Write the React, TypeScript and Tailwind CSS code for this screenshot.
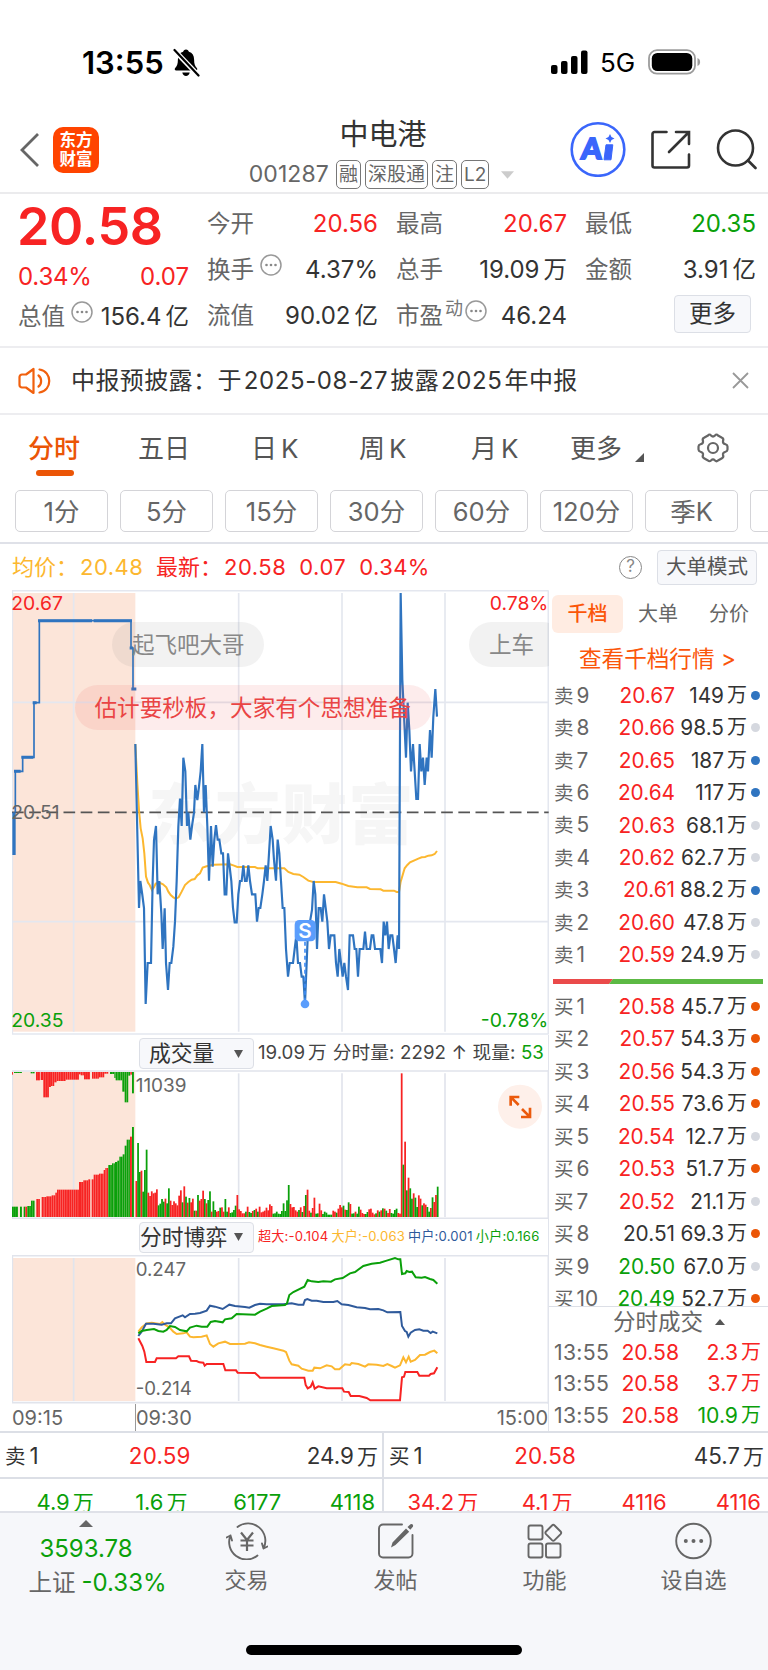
import type { ReactNode } from 'react'

const RED = '#f72323'
const GREEN = '#0aa00a'
const BLUE = '#2f74c0'
const AMBER = '#fcb72f'
const NAVY = '#2f5a9b'

// Chart coordinates are stored in thirds of a pixel
type Point = [number, number]

const shift = (points: Point[], dx: number): Point[] => points.map(([x, y]) => [x + dx, y])
const toPath = (points: Point[]) => points.map((p) => p.join(',')).join(' ')

const auctionLine: Point[] = [
  [46, 697], [46, 574], [62, 574], [68, 574], [68, 532], [102, 532], [102, 368], [118, 368], [118, 122],
  [393, 122], [393, 204], [399, 204], [399, 327], [406, 327],
]

const priceLine: Point[] = [
  [406, 492], [417, 984], [421, 903], [427, 945], [432, 984], [437, 1272], [443, 1149], [453, 1149], [458, 903],
  [462, 780], [468, 738], [473, 943], [478, 903], [484, 1000], [488, 1107], [494, 985], [498, 1149], [504, 1230],
  [509, 1149], [514, 1149], [520, 1100], [525, 1025], [530, 903], [535, 740], [540, 656], [545, 738], [550, 533],
  [556, 574], [561, 738], [565, 698], [571, 779], [576, 738], [582, 698], [586, 615], [592, 660], [597, 620],
  [602, 574], [607, 492], [612, 697], [617, 615], [622, 738], [627, 902], [633, 738], [638, 860], [643, 779],
  [648, 735], [653, 779], [658, 779], [664, 820], [669, 820], [674, 943], [679, 943], [684, 820], [689, 861],
  [694, 903], [699, 984], [704, 1027], [710, 1027], [715, 943], [720, 903], [725, 903], [730, 856], [735, 903],
  [740, 903], [745, 856], [750, 903], [756, 943], [766, 943], [771, 1025], [776, 984], [781, 984], [787, 943],
  [792, 903], [797, 856], [802, 903], [807, 820],
  ...shift([
    [2, 738], [8, 779], [12, 840], [18, 902], [23, 779], [28, 820], [33, 903], [38, 984], [43, 984], [48, 1107],
    [54, 1190], [59, 1149], [69, 1149], [74, 1107], [79, 1066], [84, 1149], [90, 1149], [95, 1190], [100, 1190],
    [105, 1272], [110, 1149], [115, 1025], [120, 1025], [126, 990], [131, 903], [136, 943], [141, 1107],
    [146, 984], [152, 984], [157, 1025], [162, 943], [167, 984], [172, 1025], [177, 1107], [182, 1066],
    [193, 1066], [198, 1149], [203, 1190], [208, 1107], [213, 1149], [218, 1190], [223, 1149], [228, 1190],
    [234, 1230], [239, 1066], [249, 1066], [254, 1107], [259, 1107], [264, 1190], [269, 1107], [280, 1107],
    [285, 1055], [290, 1107], [300, 1107], [305, 1066], [310, 1066], [315, 1107], [331, 1107], [336, 1149],
    [341, 1025], [346, 1066], [351, 1025], [356, 1107], [361, 1066], [367, 1066], [372, 1107], [377, 1149],
    [383, 1066], [387, 1107], [392, 39], [397, 300], [408, 533], [413, 368], [418, 450], [423, 574], [429, 492],
    [434, 574], [439, 657], [444, 657], [449, 492], [454, 574], [459, 533], [464, 615], [470, 533], [474, 574],
    [480, 450], [485, 533], [490, 410], [496, 327], [501, 410],
  ], 810),
]

const averageLine: Point[] = [
  [406, 492], [412, 610], [417, 690], [422, 745], [428, 775], [433, 820], [438, 890], [444, 908], [449, 915],
  [456, 930], [462, 922], [467, 911], [478, 908], [489, 913], [499, 922], [505, 935], [512, 945], [520, 952],
  [527, 956], [536, 952], [545, 935], [555, 915], [565, 906], [575, 899], [584, 897], [592, 886], [600, 880],
  [608, 863], [620, 859], [640, 854], [690, 853], [702, 857], [712, 861], [765, 861], [773, 865],
  ...shift([
    [43, 865], [55, 876], [70, 882], [88, 884], [100, 891], [115, 902], [130, 906], [197, 906], [215, 911],
    [235, 918], [262, 922], [290, 922], [300, 927], [332, 928], [340, 932], [372, 932], [380, 936], [387, 936],
    [392, 905], [398, 885], [404, 865], [412, 855], [420, 847], [445, 836], [455, 832], [465, 831], [475, 827],
    [485, 826], [494, 822], [501, 813],
  ], 810),
]

// [from, to, edge, colour]
type Run = [number, number, number, 'r' | 'g']

const auctionVolume: Run[] = [
  [36, 54, 530, 'g'], [60, 66, 530, 'g'], [71, 76, 530, 'g'], [76, 82, 530, 'r'], [82, 93, 528, 'g'],
  [93, 104, 512, 'g'], [109, 120, 507, 'r'], [125, 139, 501, 'r'], [139, 155, 499, 'r'], [155, 166, 496, 'r'],
  [166, 171, 488, 'r'], [171, 237, 479, 'r'], [237, 250, 456, 'r'], [250, 265, 451, 'r'], [265, 271, 448, 'r'],
  [275, 281, 448, 'r'], [281, 297, 434, 'r'], [297, 311, 431, 'r'], [311, 316, 420, 'r'], [316, 325, 414, 'r'],
  [325, 336, 405, 'g'], [336, 345, 400, 'g'], [345, 352, 396, 'g'], [352, 358, 392, 'g'], [358, 368, 380, 'g'],
  [368, 374, 373, 'g'], [374, 380, 347, 'g'], [380, 390, 329, 'g'], [390, 396, 320, 'r'], [396, 402, 291, 'g'],
]

const auctionUnmatched: Run[] = [
  [36, 39, 134, 'r'], [42, 66, 129, 'g'], [92, 104, 130, 'g'], [108, 120, 151, 'r'], [122, 130, 150, 'r'],
  [130, 147, 202, 'r'], [147, 153, 171, 'r'], [153, 163, 168, 'r'], [163, 170, 157, 'r'], [170, 197, 153, 'r'],
  [197, 237, 149, 'r'], [237, 242, 133, 'r'], [242, 252, 136, 'r'], [252, 270, 148, 'r'], [276, 297, 146, 'r'],
  [297, 313, 142, 'r'], [313, 325, 131, 'r'], [330, 343, 132, 'g'], [343, 347, 144, 'g'], [347, 367, 151, 'g'],
  [367, 374, 185, 'g'], [374, 385, 217, 'g'], [385, 391, 137, 'g'], [391, 396, 134, 'r'], [396, 402, 190, 'g'],
]

const volumeBefore =
  'r453 g339 g426 r422 g485 g420 g359 r488 r498 r484 r490 r488 r478 g526 g521 g507 g515 r506 g520 g475 r512 r525 r514 r520 r526 r497 r481 g517 r469 g500 r518 g504 r517 r506 g542 r542 g495 r512 r507 r482 g507 r520 g510 g484 r545 g514 g540 r545 r543 g533 r532 r545 g507 g545 r532 g549 g547 g540 g527 r495 r538 r543 r550 r550 g545 r530 g546 g549 r543 g540 r536 g545 r530 r547 r545 r542 r533 r541 r523 r528 g551 g550 g545 g551 g552 g543 g520 g543 g511 g465 r522 r532 r531 r541 r545 g540 r532 g546 r528 g495 r479 r542 g548 r534 r503 g551 g550 r521 r541 g552 g545 g548 g554 g554 g554 r542 r545 g548 r536 r525 r532 g527 r539 g540 g517 r522 g551 g550 r545 g551 g530 r539 r549 r552 g552 g546 r538 r536 r548 r553 g550 r541 g545 r541 g535 r536 g542 r549 r537 g549 g551 g540 g536 r549 r551'
const volumeAfter =
  'r130 g404 r335 g481 r443 g475 g506 r490 g503 g531 r496 r506 g526 r520 r524 g531 g545 r534 g502 r516 r495 g470'

const flowLines: { color: string; points: Point[] }[] = [
  {
    color: AMBER,
    points: [
      [415, 905], [425, 892], [440, 880], [455, 878], [480, 882], [487, 876], [495, 884], [508, 892], [520, 905],
      [530, 912], [550, 910], [560, 907], [570, 920], [580, 922], [605, 920], [620, 916], [630, 942], [640, 950],
      [655, 940], [675, 935], [690, 942], [710, 942], [735, 941], [747, 937], [765, 940], [780, 945], [800, 950],
      [820, 955], [850, 962], [858, 966],
      ...shift([
        [118, 992], [125, 1003], [145, 1007], [155, 1016], [175, 1022], [188, 1022], [193, 1013], [210, 1015],
        [230, 1006], [245, 1009], [255, 1018], [268, 1018], [285, 1003], [300, 1005], [305, 999], [325, 1002],
        [345, 1010], [355, 1003], [380, 1004], [400, 1008], [412, 1002], [425, 1008], [435, 1013], [450, 1006],
        [460, 982], [468, 997], [476, 980], [482, 995], [495, 990], [510, 975], [525, 974], [540, 966],
        [553, 962], [562, 970],
      ], 750),
    ],
  },
  {
    color: NAVY,
    points: [
      [415, 918], [425, 905], [438, 881], [460, 881], [485, 884], [500, 880], [513, 880], [525, 865], [548, 856],
      [555, 862], [570, 852], [585, 851], [600, 849], [620, 842], [630, 827], [645, 830], [668, 837], [688, 824],
      [705, 828], [735, 831], [748, 833], [765, 825], [780, 821], [800, 823], [850, 823],
      ...shift([
        [125, 820], [145, 824], [160, 824], [165, 810], [172, 807], [185, 812], [200, 812], [220, 816],
        [250, 816], [262, 813], [275, 823], [295, 825], [320, 832], [345, 834], [360, 838], [385, 837],
        [400, 841], [412, 847], [451, 846], [456, 888], [465, 903], [470, 906], [475, 920], [482, 908],
        [495, 900], [508, 898], [520, 902], [533, 902], [542, 909], [548, 905], [562, 910],
      ], 750),
    ],
  },
  {
    color: GREEN,
    points: [
      [415, 910], [425, 903], [440, 900], [462, 897], [475, 903], [490, 905], [500, 900], [510, 888], [525, 891],
      [540, 900], [560, 904], [570, 893], [590, 887], [605, 890], [622, 890], [632, 876], [645, 873], [668, 877],
      [675, 868], [695, 865], [710, 852], [765, 854], [780, 845], [800, 836], [815, 828], [855, 825], [861, 820],
      ...shift([
        [118, 795], [130, 786], [163, 770], [173, 750], [185, 754], [205, 756], [220, 754], [243, 755],
        [255, 748], [278, 744], [300, 730], [315, 726], [340, 708], [365, 701], [390, 698], [410, 692],
        [435, 684], [445, 688], [451, 688], [456, 732], [466, 730], [470, 723], [478, 726], [486, 725],
        [497, 742], [515, 743], [525, 741], [540, 747], [550, 750], [562, 761],
      ], 750),
    ],
  },
  {
    color: RED,
    points: [
      [415, 925], [427, 948], [433, 965], [439, 996], [465, 996], [470, 985], [528, 985], [535, 979], [567, 979],
      [573, 992], [590, 993], [598, 997], [610, 998], [614, 1007], [620, 1002], [670, 1002], [676, 1021],
      [708, 1021], [713, 1028], [765, 1029], [775, 1038], [780, 1043],
      ...shift([
        [163, 1043], [167, 1065], [173, 1075], [182, 1070], [188, 1057], [194, 1076], [205, 1069], [230, 1075],
        [277, 1075], [282, 1085], [296, 1086], [302, 1098], [328, 1098], [350, 1104], [361, 1111], [450, 1111],
        [456, 1042], [462, 1040], [466, 1026], [502, 1026], [508, 1037], [537, 1037], [542, 1032], [552, 1030],
        [562, 1012],
      ], 750),
    ],
  },
]

const sells = [
  ['9', '20.67', '149', 'b'], ['8', '20.66', '98.5', ''], ['7', '20.65', '187', 'b'], ['6', '20.64', '117', 'b'],
  ['5', '20.63', '68.1', ''], ['4', '20.62', '62.7', ''], ['3', '20.61', '88.2', 'b'], ['2', '20.60', '47.8', ''],
  ['1', '20.59', '24.9', ''],
]

const buys = [
  ['1', '20.58', '45.7', 'o'], ['2', '20.57', '54.3', 'o'], ['3', '20.56', '54.3', 'o'], ['4', '20.55', '73.6', 'o'],
  ['5', '20.54', '12.7', ''], ['6', '20.53', '51.7', 'o'], ['7', '20.52', '21.1', ''], ['8', '20.51', '69.3', 'o'],
  ['9', '20.50', '67.0', ''], ['10', '20.49', '52.7', 'o'],
]

const trades = [
  ['2.3', 'text-[#f72323]'],
  ['3.7', 'text-[#f72323]'],
  ['10.9', 'text-[#0aa00a]'],
]

const periods = ['1分', '5分', '15分', '30分', '60分', '120分', '季K', '']

function StatusBar() {
  return (
    <div className="flex h-[106px] items-start justify-between pr-[67px] pl-[82px]">
      <div className="mt-[44px] flex items-center gap-[9px]">
        <span className="text-[31px] leading-[38px] font-semibold">13:55</span>
        <svg width="27" height="30" viewBox="0 0 27 30" className="-mt-px">
          <path d="M13 1.5c1.6 0 2.6 1 2.9 2.3 3.5 1 5.2 4 5.2 7.6 0 4.6.9 6.6 2.7 8.6.9 1.1.5 2.5-1 2.5H3.2c-1.5 0-1.9-1.4-1-2.5 1.8-2 2.7-4 2.7-8.6 0-3.6 1.7-6.6 5.2-7.6C10.4 2.5 11.4 1.5 13 1.5zM9.3 24.500h7.400c-.4 2-1.900 3.500-3.700 3.500s-3.300-1.500-3.700-3.500z" fill="#000" />
          <path d="M2 3 25 27" stroke="#fff" strokeWidth="5" />
          <path d="M1.5 2 25.5 27.5" stroke="#000" strokeWidth="2.2" strokeLinecap="round" />
        </svg>
      </div>
      <div className="mt-[49px] flex h-[26px] items-center">
        <svg width="37" height="26" viewBox="0 0 37 26">
          <rect x="0" y="16" width="6.5" height="9" rx="2" />
          <rect x="10" y="12" width="6.5" height="13" rx="2" />
          <rect x="20" y="7" width="6.5" height="18" rx="2" />
          <rect x="30" y="1.5" width="6.5" height="23.5" rx="2" />
        </svg>
        <span className="ml-[12px] w-[48px] pt-[2px] text-[26px] leading-none">5G</span>
        <svg width="53" height="26" viewBox="0 0 53 26">
          <rect x="1" y="1.2" width="46" height="23.5" rx="8" fill="none" stroke="#9c9c9c" strokeWidth="1.8" />
          <rect x="3.8" y="4" width="40.5" height="18" rx="5.5" />
          <path d="M49.5 9v8c1.8-.7 2.6-2.2 2.6-4s-.8-3.3-2.6-4z" fill="#9c9c9c" />
        </svg>
      </div>
    </div>
  )
}

function Tag({ children }: { children: ReactNode }) {
  return (
    <span className="flex h-[29px] items-center rounded-[5px] border border-[#777] px-[2px] text-[19px] leading-none text-[#666]">
      {children}
    </span>
  )
}

function Header() {
  return (
    <header className="flex h-[88px] justify-between border-b-2 border-[#ebebed] pr-[11px] pl-[19px]">
      <div className="flex w-[179px] items-center pt-px">
        <svg width="21" height="36" viewBox="0 0 21 36" fill="none" stroke="#666" strokeWidth="2.8">
          <path d="M19 2 3 18l16 16" />
        </svg>
        <div className="ml-[13px] flex h-[46px] w-[46px] flex-col items-center justify-center rounded-[10px] bg-[#ff4400] text-[16.5px] leading-[19px] font-bold text-white">
          <span>东方</span>
          <span>财富</span>
        </div>
      </div>
      <div className="flex flex-col items-center">
        <h1 className="mt-[9px] mr-[2px] text-center text-[29px] leading-[40px] text-[#333]">中电港</h1>
        <div className="mt-[5px] mr-[5px] flex items-center gap-[4px]">
          <span className="mr-[3px] text-[23px] leading-none tracking-[0.1px] text-[#666]">001287</span>
          <Tag>融</Tag>
          <Tag>深股通</Tag>
          <Tag>注</Tag>
          <Tag>L2</Tag>
          <svg width="13" height="8" viewBox="0 0 14 8" className="ml-[8px]">
            <path d="M0 0h14L7 8z" fill="#ccc" />
          </svg>
        </div>
      </div>
      <div className="flex w-[187px] items-center justify-between">
        <svg width="56" height="56" viewBox="0 0 56 56">
          <circle cx="28" cy="28.5" r="26.3" fill="none" stroke="#3a66fb" strokeWidth="2.6" />
          <text x="11" y="38.5" fontSize="29" fontWeight="900" fill="#3a66fb" stroke="#3a66fb" strokeWidth="1.8" fontFamily="Lato" transform="skewX(-4) translate(2.5 0)">
            A
          </text>
          <path d="M36 23.8h6.8l-1.8 15h-7z" fill="#3a66fb" stroke="#3a66fb" strokeWidth="1" strokeLinejoin="round" />
          <path d="M40 13l1.5 3 3 1.5-3 1.5-1.5 3-1.5-3-3-1.5 3-1.5z" fill="#3a66fb" />
        </svg>
        <svg width="41" height="41" viewBox="0 0 41 41" fill="none" stroke="#333" strokeWidth="2.6" strokeLinecap="round">
          <path d="M16.5 3H4.500a2 2 0 0 0-2 2v31.500a2 2 0 0 0 2 2h32.500a2 2 0 0 0 2-2V25.500" />
          <path d="M26 3h13V15M38.500 3.500 19 23" />
        </svg>
        <svg width="41" height="41" viewBox="0 0 41 41" fill="none" stroke="#333" strokeWidth="2.6" strokeLinecap="round">
          <circle cx="19.5" cy="19" r="17.5" />
          <path d="m32 31.5 7.5 7.5" />
        </svg>
      </div>
    </header>
  )
}

function Dots() {
  return (
    <svg width="22" height="22" viewBox="0 0 22 22" className="mb-[10px] ml-[6px]" fill="#888">
      <circle cx="11" cy="11" r="10" fill="none" stroke="#999" strokeWidth="1.5" />
      <circle cx="6.5" cy="11" r="1.3" />
      <circle cx="11" cy="11" r="1.3" />
      <circle cx="15.5" cy="11" r="1.3" />
    </svg>
  )
}

function Stat({
  label,
  value,
  unit,
  extra,
  className = 'text-[#333]',
}: {
  label: string
  value: string
  unit?: string
  extra?: ReactNode
  className?: string
}) {
  return (
    <div className="flex h-[46px] items-center whitespace-nowrap">
      <span className="text-[23.5px] text-[#666]">{label}</span>
      {extra}
      <span className={`ml-auto text-[24px] ${className}`}>
        {value}
        {unit && <span className="ml-[4px] text-[23.5px]">{unit}</span>}
      </span>
    </div>
  )
}

function Quote() {
  return (
    <section className="flex h-[154px] border-b-2 border-[#ededf0] pl-[18px]">
      <div className="w-[171px]">
        <div className="mt-[5px] -ml-px text-[52px] leading-[56px] font-semibold tracking-[-0.3px] text-[#f72323]">20.58</div>
        <div className="mt-[8px] flex justify-between text-[24px] leading-[28px] text-[#f72323]">
          <span className="tracking-[-0.2px]">0.34%</span>
          <span>0.07</span>
        </div>
        <div className="mt-[3px]">
          <Stat label="总值" value="156.4" unit="亿" extra={<Dots />} />
        </div>
      </div>
      <div className="mt-[7px] ml-[18px] w-[171px]">
        <Stat label="今开" value="20.56" className="text-[#f72323]" />
        <Stat label="换手" value="4.37%" extra={<Dots />} />
        <Stat label="流值" value="90.02" unit="亿" />
      </div>
      <div className="mt-[7px] ml-[18px] w-[171px]">
        <Stat label="最高" value="20.67" className="text-[#f72323]" />
        <Stat label="总手" value="19.09" unit="万" />
        <Stat
          label="市盈"
          value="46.24"
          extra={
            <span className="flex items-center">
              <span className="-mr-[4px] mb-[16px] ml-[2px] text-[18px] text-[#777]">动</span>
              <Dots />
            </span>
          }
        />
      </div>
      <div className="mt-[7px] ml-[18px] w-[171px]">
        <Stat label="最低" value="20.35" className="text-[#0aa00a]" />
        <Stat label="金额" value="3.91" unit="亿" />
        <button className="mt-[2px] ml-[89px] flex h-[38px] w-[77px] items-center justify-center rounded-[4px] border border-[#dcdfe6] bg-[#f7f8fb] text-[23.5px] text-[#333]">
          更多
        </button>
      </div>
    </section>
  )
}

function Notice() {
  return (
    <section className="flex h-[67px] items-center border-b-2 border-[#ededf0] pr-[19px] pl-[18px]">
      <svg width="34" height="28" viewBox="0 0 34 28" fill="none" stroke="#f1600d" strokeWidth="2.2" strokeLinejoin="round" strokeLinecap="round">
        <path d="M15.5 2v24L8 20.5H4a2.5 2.5 0 0 1-2.5-2.5v-8A2.5 2.5 0 0 1 4 7.5h4z" />
        <path d="M20.5 8.5c3.5 2.5 3.5 8.5 0 11M21.5 2.5C34.500 4.500 34.500 23.500 21.500 25.500" />
      </svg>
      <span className="ml-[19px] flex text-[24px] tracking-[0.4px] text-[#333]">
        中报预披露：于<span className="mx-[2px] tracking-[0.6px]">2025-08-27</span>披露
        <span className="mx-[2px] tracking-[0.6px]">2025</span>年中报
      </span>
      <svg width="17" height="17" viewBox="0 0 17 17" className="ml-auto" stroke="#999" strokeWidth="1.8">
        <path d="m1 1 15 15M16 1 1 16" />
      </svg>
    </section>
  )
}

function KTab({ label, className }: { label: string; className: string }) {
  return (
    <span className={className}>
      {label}
      <span className="ml-[4px]">K</span>
    </span>
  )
}

function ChartTabs() {
  return (
    <nav className="flex h-[75px] items-start pt-[15px] text-[26px] leading-[38px] whitespace-nowrap text-[#555]">
      <div className="ml-[28px] w-[110px] font-medium text-[#eb5506]">
        分时
        <div className="mt-[2px] ml-[8px] h-[6px] w-[38px] rounded-full bg-[#eb5506]" />
      </div>
      <span className="w-[113px]">五日</span>
      <KTab label="日" className="w-[108px]" />
      <KTab label="周" className="w-[112px]" />
      <KTab label="月" className="w-[99px]" />
      <span className="flex w-[127px]">
        更多
        <svg width="9" height="9" viewBox="0 0 9 9" className="mt-[23px] ml-[13px]">
          <path d="M9 0v9H0z" fill="#555" />
        </svg>
      </span>
      <svg width="32" height="32" viewBox="0 0 32 32" className="mt-[2px]" fill="none" stroke="#666" strokeWidth="2.2" strokeLinejoin="round">
        <path d="M11 3.5q1.5-2 3 0q2 2 4 0q1.5-2 3 0l4 2.3q2 1 1 3.2q-.5 2.5 2.5 3.3q2 .7 2 2.2v3q0 1.5-2 2.2q-3 .8-2.5 3.3q1 2.2-1 3.2l-4 2.3q-1.5 1.5-3 0q-2-2-4 0q-1.5 1.5-3 0l-4-2.3q-2-1-1-3.2q.5-2.5-2.5-3.3q-2-.7-2-2.2v-3q0-1.5 2-2.2q3-.8 2.5-3.3q-1-2.2 1-3.2z" />
        <circle cx="16" cy="16" r="5" />
      </svg>
    </nav>
  )
}

function PeriodBar() {
  return (
    <div className="flex h-[54px] gap-[12px] overflow-hidden border-b-2 border-[#dfe1e8] pl-[15px]">
      {periods.map((label) => (
        <button key={label} className="flex h-[42px] w-[93px] shrink-0 items-center justify-center rounded-[5px] border border-[#d4d4d8] pt-[2px] text-[25.5px] text-[#666]">
          {label}
        </button>
      ))}
    </div>
  )
}

function PriceSummary() {
  return (
    <div className="flex h-[46px] items-center pr-[11px] pl-[12px] text-[22px] whitespace-nowrap">
      <span className="text-[#fcb72f]">均价：</span>
      <span className="ml-[2px] w-[76px] tracking-[0.5px] text-[#fcb72f]">20.48</span>
      <span className="text-[#f72323]">最新：</span>
      <span className="ml-[2px] tracking-[0.5px] text-[#f72323]">20.58</span>
      <span className="ml-[13px] tracking-[0.5px] text-[#f72323]">0.07</span>
      <span className="ml-[13px] tracking-[0.4px] text-[#f72323]">0.34%</span>
      <span className="ml-auto flex size-[23px] items-center justify-center rounded-full border-[1.5px] border-[#888] text-[17px] text-[#888]">?</span>
      <button className="ml-[15px] flex h-[35px] w-[100px] items-center justify-center rounded-[4px] border border-[#dcdfe6] bg-[#f7f8fb] pt-px text-[20.5px] text-[#555]">
        大单模式
      </button>
    </div>
  )
}

const gridX = [221, 716, 1026, 1335]

function PriceChart() {
  return (
    <div className="relative h-[445px] overflow-hidden">
      <svg width="537" height="445" viewBox="36 30 1611 1335" className="absolute inset-0" fontFamily="Inter" fontSize="58">
        <rect x="36" y="39" width="370" height="1316" fill="#fce5d9" />
        <text x="445" y="774" fontSize="196" letterSpacing="4" fontWeight="900" fill="#f6f6f6" fontFamily="Noto Sans CJK SC">
          东方财富
        </text>
        <g stroke="#e4e7ef" strokeWidth="5">
          <path d="M36 32H1646M36 1362H1646M37 32V1362M1645 32V1362M36 367H1646M36 1025H1646" />
          {gridX.map((x) => (
            <path key={x} d={`M${x} 39V1355`} />
          ))}
        </g>
        <path d="M36 697H1646" stroke="#555" strokeWidth="5" strokeDasharray="35 16.5" />
        <polyline points={toPath(averageLine)} fill="none" stroke={AMBER} strokeWidth="6" />
        <g fill="none" stroke={BLUE}>
          <polyline points={toPath(auctionLine)} strokeWidth="5" />
          <path d="M42 697V825" strokeWidth="10" />
          <path d="M42 574H62M64 532H100M98 368H110M114 122H276M281 122H396M389 204H399M394 327H409" strokeWidth="9" />
          <polyline points={toPath(priceLine)} strokeWidth="6.5" />
        </g>
        <path d="M915 1085V1262" stroke="#3f8cf5" strokeWidth="5" strokeDasharray="12 9" />
        <circle cx="915" cy="1272" r="13" fill="#5a9dfc" />
        <rect x="884" y="1020" width="63" height="64" rx="14" fill="#5a9dfc" />
        <text x="915" y="1074" textAnchor="middle" fill="#fff" fontWeight="600" fontSize="62">
          S
        </text>
        <text x="34" y="90" fill={RED}>20.67</text>
        <text x="34" y="716" fill="#666">20.51</text>
        <text x="34" y="1341" fill={GREEN}>20.35</text>
        <text x="1645" y="90" fill={RED} textAnchor="end">0.78%</text>
        <text x="1645" y="1341" fill={GREEN} textAnchor="end">-0.78%</text>
      </svg>
      <div className="absolute top-[32px] left-[100px] h-[45px] w-[152px] rounded-full bg-[#808080]/10 pl-[20px] text-[22.5px] leading-[46px] text-[#888]">
        起飞吧大哥
      </div>
      <div className="absolute top-[32px] left-[457px] h-[45px] w-[96px] rounded-full bg-[#808080]/10 pl-[20px] text-[22.5px] leading-[46px] text-[#888]">
        上车
      </div>
      <div className="absolute top-[95px] left-[63px] h-[45px] w-[357px] rounded-full bg-[#e84848]/10 pl-[19.5px] text-[22.6px] leading-[46px] whitespace-nowrap text-[#ea4444]">
        估计要秒板，大家有个思想准备
      </div>
    </div>
  )
}

function IndicatorSelect({ label }: { label: string }) {
  return (
    <button className="ml-[127px] flex h-[31px] w-[115px] shrink-0 items-center rounded-[4px] border border-[#dcdfe6] bg-[#f7f8fb] text-left text-[21.8px] whitespace-nowrap text-[#333]">
      <span className={label.length > 3 ? 'w-[94px]' : 'w-[94px] pl-[9px]'}>{label}</span>
      <svg width="9" height="8" viewBox="0 0 9 8">
        <path d="M0 0h9L4.5 8z" fill="#555" />
      </svg>
    </button>
  )
}

function runBars(runs: Run[], base: number) {
  return runs.flatMap(([from, to, edge, color]) => {
    const count = Math.max(1, Math.round((to - from) / 5.4))
    const step = (to - from) / count
    return Array.from({ length: count }, (_, i) => (
      <rect
        key={`${from}-${i}`}
        x={from + i * step}
        y={Math.min(edge, base)}
        width={step - 0.3}
        height={Math.abs(base - edge)}
        fill={color === 'r' ? RED : GREEN}
      />
    ))
  })
}

function minuteBars(data: string, from: number, to: number) {
  const bars = data.split(' ')
  const step = (to - from) / (bars.length - 1)
  return bars.map((bar, i) => (
    <rect
      key={i}
      x={from + i * step - 2.6}
      y={Number(bar.slice(1))}
      width="5.3"
      height={561 - Number(bar.slice(1))}
      fill={bar[0] === 'r' ? RED : GREEN}
    />
  ))
}

function VolumeChart() {
  return (
    <svg width="537" height="149" viewBox="36 120 1611 447" fontFamily="Inter" fontSize="57">
      <rect x="36" y="125" width="370" height="436" fill="#fce5d9" />
      <g stroke="#e1e4ec" strokeWidth="5">
        <path d="M36 123H1646M36 565H1646" />
        <path d="M37 123V565M1645 120V567" />
        {gridX.map((x) => (
          <path key={x} d={`M${x} 130V561`} />
        ))}
      </g>
      {runBars(auctionVolume, 561)}
      {runBars(auctionUnmatched, 126)}
      {minuteBars(volumeBefore, 409, 1200)}
      {minuteBars(volumeAfter, 1205, 1313)}
      <text x="407" y="186" fill="#666">11039</text>
      <circle cx="1560" cy="230" r="66" fill="#fef0ea" />
      <g fill="none" stroke="#eb5a0c" strokeWidth="8">
        <path d="M1532 227V201H1558M1534 203 1556 225" />
        <path d="M1563 261H1590V233M1588 259 1566 237" />
      </g>
    </svg>
  )
}

function FlowChart() {
  return (
    <svg width="537" height="149" viewBox="36 675 1611 447" fontFamily="Inter" fontSize="56">
      <rect x="36" y="684" width="370" height="429" fill="#fce5d9" />
      <g stroke="#e1e4ec" strokeWidth="5">
        <path d="M36 677H1646M36 1118H1646M37 677V1118M1645 675V1122" />
        {gridX.map((x) => (
          <path key={x} d={`M${x} 684V1113`} />
        ))}
      </g>
      {flowLines.map((line) => (
        <polyline key={line.color} points={toPath(line.points)} fill="none" stroke={line.color} strokeWidth="6" />
      ))}
      <text x="407" y="739" fill="#666">0.247</text>
      <text x="407" y="1094" fill="#666">-0.214</text>
    </svg>
  )
}

function Charts() {
  return (
    <div className="flex w-[549px] shrink-0 flex-col pl-[12px]">
      <PriceChart />
      <div className="flex h-[35px] items-center border-r border-[#e1e4ec] pt-[2px] whitespace-nowrap text-[#444]">
        <IndicatorSelect label="成交量" />
        <span className="ml-[4px] flex text-[18.7px]">
          19.09<span className="ml-[3px]">万</span>
          <span className="ml-[6px] tracking-[0.1px]">
            分时量: 2292 ↑ 现量: <span className="text-[#0aa00a]">53</span>
          </span>
        </span>
      </div>
      <VolumeChart />
      <div className="flex h-[36px] items-center border-r border-[#e1e4ec] whitespace-nowrap">
        <IndicatorSelect label="分时博弈" />
        <span className="ml-[4px] flex gap-[3px] text-[13.1px] tracking-[0.2px]">
          <span className="text-[#f72323]">超大:-0.104</span>
          <span className="text-[#fcb72f]">大户:-0.063</span>
          <span className="text-[#2f5a9b]">中户:0.001</span>
          <span className="text-[#0aa00a]">小户:0.166</span>
        </span>
      </div>
      <FlowChart />
      <div className="flex h-[27px] items-center border-r border-[#e1e4ec] text-[20px] leading-[28px] text-[#666]">
        <span className="h-full w-[124px] border-r border-[#999]">09:15</span>
        <span>09:30</span>
        <span className="ml-auto">15:00</span>
      </div>
    </div>
  )
}

function DepthRow({ side, level, price, amount, dot }: { side: string; level: string; price: string; amount: string; dot: string }) {
  const value = Number(price)
  const color = value > 20.51 ? 'text-[#f72323]' : value < 20.51 ? 'text-[#0aa00a]' : 'text-[#333]'
  const dotColor = dot === 'b' ? 'bg-[#2f74c0]' : dot === 'o' ? 'bg-[#eb5506]' : 'bg-[#d5d8df]'
  return (
    <div className="flex h-[32.47px] shrink-0 items-center text-[20.8px] whitespace-nowrap">
      <span className="w-[56px] text-[#666]">
        <span className="mr-[3px] text-[19.5px]">{side}</span>
        {level}
      </span>
      <span className={`w-[65px] text-right ${color}`}>{price}</span>
      <span className="flex w-[72px] justify-end text-[#333]">
        {amount}
        <span className="ml-[3px] text-[20px]">万</span>
      </span>
      <span className={`ml-[4px] size-[9px] rounded-full ${dotColor}`} />
    </div>
  )
}

function OrderBook() {
  return (
    <aside className="flex min-w-0 flex-1 flex-col">
      <div className="mt-[5px] ml-[3px] flex h-[38px] shrink-0 items-center text-[20px] text-[#666]">
        <span className="flex h-full w-[71px] items-center justify-center rounded-[6px] bg-[#ffece2] font-medium text-[#fb560a]">千档</span>
        <span className="ml-[15px]">大单</span>
        <span className="ml-[31px]">分价</span>
      </div>
      <div className="mt-[9px] pl-[30px] text-[22.6px] leading-[34px] text-[#fb560a]">查看千档行情 &gt;</div>
      <div className="mt-[3px] flex h-[628px] shrink-0 flex-col overflow-hidden border-b border-[#dcdfe6] pl-[5px]">
        {sells.map(([level, price, amount, dot]) => (
          <DepthRow key={level} side="卖" level={level} price={price} amount={amount} dot={dot} />
        ))}
        <svg width="210" height="5" viewBox="0 0 210 5" className="mt-[8px] mb-[6px] -ml-px shrink-0">
          <path d="M0 0h60l-4 5H0z" fill="#ea4a4a" />
          <path d="M60 0h150v5H56z" fill="#5cb944" />
        </svg>
        {buys.map(([level, price, amount, dot]) => (
          <DepthRow key={level} side="买" level={level} price={price} amount={amount} dot={dot} />
        ))}
      </div>
      <div className="flex h-[30px] shrink-0 items-center pl-[64px] text-[22.5px] text-[#666]">
        分时成交
        <svg width="10" height="6" viewBox="0 0 10 6" className="ml-[12px]">
          <path d="M5 0 10 6H0z" fill="#555" />
        </svg>
      </div>
      {trades.map(([amount, color]) => (
        <div key={amount} className="flex h-[31.4px] shrink-0 items-center pl-[5px] text-[21.2px] whitespace-nowrap">
          <span className="w-[60px] tracking-[0.3px] text-[#666]">13:55</span>
          <span className="w-[65px] text-right text-[#f72323]">20.58</span>
          <span className={`flex w-[82px] justify-end ${color}`}>
            {amount}
            <span className="ml-[3px] text-[20px]">万</span>
          </span>
        </div>
      ))}
    </aside>
  )
}

function QueueSide({ side, price, amount, queue, color }: { side: string; price: string; amount: string; queue: string[][]; color: string }) {
  return (
    <div className="w-1/2 overflow-hidden border-r-2 border-[#dcdfe6] last:border-r-0">
      <div className="flex h-[46px] items-center justify-between border-b-2 border-[#dcdfe6] pt-[2px] pr-[4px] pl-[5px] text-[22.4px] text-[#333]">
        <span>
          <span className="text-[20.5px]">{side}</span>
          <span className="ml-[4px]">1</span>
        </span>
        <span className="mr-[26px] tracking-[0.2px] text-[#f72323]">{price}</span>
        <span>
          {amount}
          <span className="ml-[3px] text-[21px]">万</span>
        </span>
      </div>
      <div className={`grid grid-cols-4 pr-[7px] text-right text-[22px] leading-[47px] whitespace-nowrap ${color}`}>
        {queue.map(([value, unit], i) => (
          <span key={i}>
            {value}
            {unit && <span className="ml-[3px] text-[21px]">{unit}</span>}
          </span>
        ))}
      </div>
    </div>
  )
}

function FooterItem({ label, children }: { label: string; children: ReactNode }) {
  return (
    <div className="flex w-[149px] flex-col items-center pt-[9px]">
      <svg width="42" height="38" viewBox="0 0 42 38" fill="none" stroke="#666" strokeWidth="1.9" strokeLinecap="round" strokeLinejoin="round">
        {children}
      </svg>
      <span className="mt-[3px] text-[22px] leading-[34px] text-[#666]">{label}</span>
    </div>
  )
}

function Footer() {
  return (
    <footer className="relative flex h-[159px] items-start border-t-2 border-[#dfe1e8] bg-[#f6f7fa]">
      <div className="flex w-[172px] flex-col items-center text-[#0aa00a]">
        <svg width="14" height="7" viewBox="0 0 14 7" className="mt-[7px]">
          <path d="M7 0 14 7H0z" fill="#666" />
        </svg>
        <span className="mt-[5px] text-[24px] leading-[34px]">3593.78</span>
        <span className="flex pl-[23px] text-[24px] leading-[34px]">
          <span className="mr-[6px] text-[23.5px] text-[#666]">上证</span>-0.33%
        </span>
      </div>
      <FooterItem label="交易">
        <path d="M11.5 5A17.3 17.3 0 0 1 37.5 26.5l4-2M37.5 26.5l-1.500-5" />
        <path d="M31.5 33.5A17.3 17.3 0 0 1 4.5 13.5l-4 2M4.5 13.5l1.500 5" />
        <path d="m15 10.5 6 7.5 6-7.5M21 18v11M14.5 18.5h13M14.5 23.5h13" strokeWidth="2.2" strokeLinecap="butt" />
      </FooterItem>
      <FooterItem label="发帖">
        <path d="M27 2.5H8a4 4 0 0 0-4 4v25a4 4 0 0 0 4 4h25.5a4 4 0 0 0 4-4V13" />
        <path d="m31 6.5 3.2 3.2L20.5 23l-4.5 2.5 1.5-5zM32.5 5l3-2.800q1.500-.5 2.200.3t.2 2.200l-2.600 3z" fill="#666" stroke="none" />
      </FooterItem>
      <FooterItem label="功能">
        <rect x="4.5" y="3.5" width="14" height="14" rx="2" />
        <rect x="4.5" y="21.5" width="14" height="14" rx="2" />
        <rect x="22" y="21.5" width="14.5" height="14" rx="2" />
        <path d="M28 3.5q1.3-1.3 2.600 0l6 6q1.200 1.300 0 2.600l-6 6q-1.300 1.200-2.600 0l-6-6q-1.200-1.300 0-2.600z" />
      </FooterItem>
      <FooterItem label="设自选">
        <circle cx="20.5" cy="19" r="17.3" />
        <g fill="#666" stroke="none">
          <circle cx="12.8" cy="19" r="2" />
          <circle cx="20.5" cy="19" r="2" />
          <circle cx="28.2" cy="19" r="2" />
        </g>
      </FooterItem>
      <div className="absolute bottom-[15px] left-[246px] h-[10px] w-[276px] rounded-full bg-black" />
    </footer>
  )
}

export default function App() {
  return (
    <main className="flex h-[1670px] w-[768px] flex-col overflow-hidden bg-white font-[Inter,'Noto_Sans_CJK_SC',sans-serif] text-black">
      <StatusBar />
      <Header />
      <Quote />
      <Notice />
      <ChartTabs />
      <PeriodBar />
      <PriceSummary />
      <div className="flex h-[841px]">
        <Charts />
        <OrderBook />
      </div>
      <div className="flex h-[80px] shrink-0 overflow-hidden border-t-2 border-[#dcdfe6]">
        <QueueSide
          side="卖"
          price="20.59"
          amount="24.9"
          queue={[['4.9', '万'], ['1.6', '万'], ['6177'], ['4118']]}
          color="text-[#0aa00a]"
        />
        <QueueSide
          side="买"
          price="20.58"
          amount="45.7"
          queue={[['34.2', '万'], ['4.1', '万'], ['4116'], ['4116']]}
          color="text-[#f72323]"
        />
      </div>
      <Footer />
    </main>
  )
}
